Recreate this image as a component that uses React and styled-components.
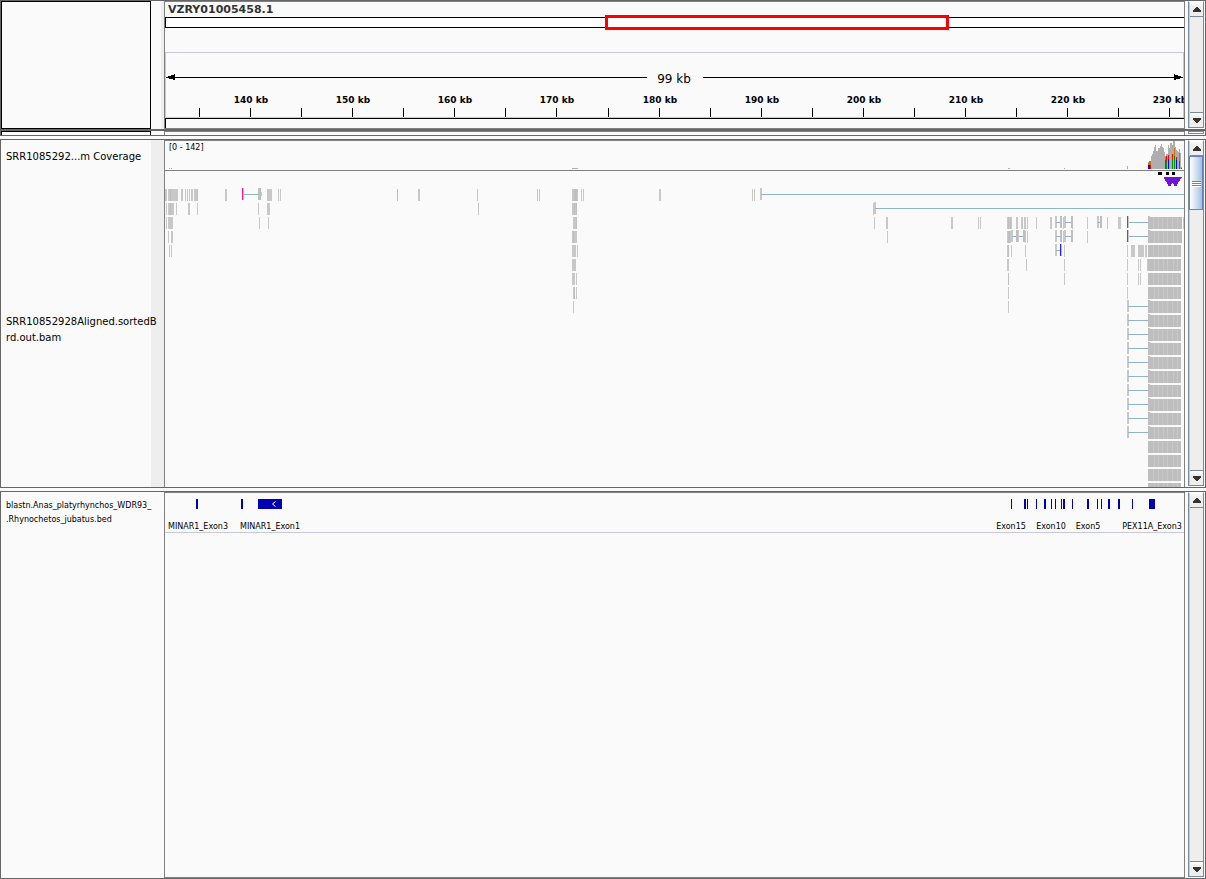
import React from "react";
import styled, { createGlobalStyle } from "styled-components";

const DARK = "#666666";
const MID = "#808080";
const PAPER = "#fafafa";
const GUTTER = "#eeeeee";
const LAVENDER = "#c8c8d8";
const STEEL = "#7a8a99";
const READ = "#c8c8c8";
const READ_DARK = "#bebebe";
const SPLICE = "#8fb4c8";
const FEATURE = "#0000b2";

const GlobalStyle = createGlobalStyle`
  * { box-sizing: border-box; }
  body {
    margin: 0;
    background: ${PAPER};
    color: #000;
    font-family: "DejaVu Sans", Verdana, sans-serif;
  }
`;

const Page = styled.main`
  min-height: 100vh;
  display: flex;
  flex-direction: column;
  gap: 3px;
`;

const Panel = styled.section`
  display: grid;
  grid-template-columns: 150px 13px minmax(0, 1fr) 3px 16px;
  min-height: ${(p) => p.$height || 0}px;
  flex: ${(p) => (p.$grow ? "1 0 auto" : "none")};
  border: 1px solid ${DARK};
  padding-right: 1px;
`;

const HeaderGroup = styled.header`
  display: flex;
  flex-direction: column;
`;

const HeaderPanel = styled(Panel)`
  border-bottom-width: 2px;
`;

const StripPanel = styled(Panel)`
  border-top: 0;
`;

const NameColumn = styled.div`
  display: flex;
  flex-direction: column;
  z-index: 1;
  border: ${(p) => (p.$boxed ? "1px solid #000" : "0")};
  border-bottom-width: ${(p) => (p.$open ? 0 : 1)}px;
`;

const TrackName = styled.div`
  display: flex;
  flex-direction: column;
  justify-content: center;
  flex: ${(p) => (p.$height ? "none" : 1)};
  height: ${(p) => (p.$height ? `${p.$height}px` : "auto")};
  padding: ${(p) => (p.$small ? 0 : 2)}px 0 0 5px;
  font-size: ${(p) => (p.$small ? 8 : 10)}px;
  line-height: ${(p) => (p.$small ? 14 : 16)}px;
  white-space: nowrap;
`;

const Gutter = styled.div`
  background: ${(p) => (p.$shade === "full" ? GUTTER : PAPER)};
  border-right: ${(p) => (p.$shade === "edge" ? `3px solid ${GUTTER}` : "0")};
`;

const DataColumn = styled.div`
  border: 1px solid ${MID};
  border-bottom-width: ${(p) => (p.$open ? 0 : 1)}px;
  overflow: hidden;
`;

const Chart = styled.svg`
  display: block;
  width: 100%;
  height: ${(p) => p.$height}px;
  shape-rendering: crispEdges;
  font-family: inherit;
`;

const TrackRule = styled.div`
  border-bottom: 1px solid ${LAVENDER};
`;

const Spacer = styled.div``;

const Scroll = styled.div`
  display: flex;
  flex-direction: column;
  margin-bottom: 1px;
  border: 1px solid ${STEEL};
  border-top-color: #fff;
  background: ${GUTTER};
  box-shadow: inset 1px 0 0 #b8cfe5;
`;

const ScrollButton = styled.button`
  display: flex;
  align-items: center;
  justify-content: center;
  height: 15px;
  margin: 0 0 0 1px;
  padding: 0;
  border: 0 solid ${STEEL};
  border-width: ${(p) => (p.$down ? "1px 0 0" : "0 0 1px")};
  background: linear-gradient(#ffffff, #eeeeee 30%);
`;

const ScrollTrough = styled.div`
  flex: 1;
`;

const Thumb = styled.div`
  display: flex;
  flex-direction: column;
  align-items: center;
  justify-content: center;
  gap: 1px;
  height: 54px;
  border: 1px solid #6382bf;
  background: linear-gradient(90deg, #ffffff, #c8dcf0 60%, #a3c0dc);
`;

const Grip = styled.i`
  width: 9px;
  height: 1px;
  background: #6382bf;
  box-shadow: 0 1px 0 #ffffff;
`;

const StripScroll = styled.div`
  border: 1px solid ${STEEL};
  background: #fff;
  margin-bottom: 1px;
`;

/* Genomic canvas: column 165 is the first base shown, 1019 columns in all. */
const X0 = 165;
const SPAN = 1019;
const pct = (x) => `${((x - X0) / SPAN) * 100}%`;

function Marks({ top, height, children }) {
  return (
    <svg
      width="100%"
      height={height}
      viewBox={`${X0} ${top} ${SPAN} ${height}`}
      preserveAspectRatio="none"
    >
      {children}
    </svg>
  );
}

function Arrow({ down }) {
  return (
    <svg width="8" height="5" viewBox="0 0 8 5" shapeRendering="crispEdges" aria-hidden="true">
      <path
        fill="#333"
        d={down ? "M0 0h8v2h-1v1h-1v1h-1v1h-2v-1h-1v-1h-1v-1h-1z" : "M3 0h2v1h1v1h1v1h1v2h-8v-2h1v-1h1v-1h1z"}
      />
    </svg>
  );
}

function ScrollBar({ label, thumb }) {
  return (
    <Scroll>
      <ScrollButton type="button" aria-label={`Scroll ${label} up`}>
        <Arrow />
      </ScrollButton>
      <ScrollTrough>
        {thumb && (
          <Thumb>
            <Grip />
            <Grip />
            <Grip />
          </Thumb>
        )}
      </ScrollTrough>
      <ScrollButton type="button" $down aria-label={`Scroll ${label} down`}>
        <Arrow down />
      </ScrollButton>
    </Scroll>
  );
}

const TICKS = [
  199, 250, 301, 352, 403, 454, 505, 556, 608, 659, 710, 761, 812, 863, 914, 965, 1016, 1067,
  1118, 1169,
];

function Ruler() {
  return (
    <Chart $height={126} role="img" aria-label="Chromosome position ruler">
      <Marks top={2} height={126}>
        <rect x="165" y="17" width="1020" height="11" fill="#000" />
        <rect x="166" y="18" width="1018" height="9" fill="#fff" />
        <path fill={LAVENDER} d="M165 52h1019v1h-1019zM165 53h1v65h-1zM1183 53h1v65h-1zM165 117h1019v1h-1019z" />
        <path fill="#000" d="M165 118h1019v1h-1019zM165 119h1v9h-1z" />
        <path fill="#000" d="M166 77h481v1h-481zM703 77h480v1h-480z" />
        <path fill="#000" d="M167 77l8-3v6l-8-2zM1182 77l-8-3v6l8-2z" />
        {TICKS.map((x) => (
          <rect key={x} x={x} y="108" width="1" height="9" />
        ))}
        <rect x="606.5" y="16.5" width="341" height="12" fill="none" stroke="#f00" strokeWidth="3" />
      </Marks>
      <text x="3" y="11" fontSize="11" fontWeight="700" fill="#333">
        VZRY01005458.1
      </text>
      <text x={pct(674)} y="81" fontSize="12" textAnchor="middle">
        99 kb
      </text>
      {TICKS.filter((_, i) => i % 2 === 1).map((x, i) => (
        <text key={x} x={pct(x + 1)} y="101" fontSize="9" fontWeight="700" textAnchor="middle">
          {140 + i * 10} kb
        </text>
      ))}
    </Chart>
  );
}

/* Reads per row as [x, width]. */
const ROWS = [
  [[165, 2], [168, 10], [181, 2], [185, 1], [187, 1], [189, 1], [191, 2], [194, 4], [225, 2], [267, 5], [278, 1], [280, 1], [397, 1], [418, 2], [477, 1], [537, 1], [539, 1], [572, 6], [581, 1], [583, 1], [659, 2], [752, 1], [754, 1]],
  [[166, 1], [168, 6], [176, 1], [188, 2], [197, 1], [258, 1], [267, 3], [478, 1], [572, 5], [873, 1]],
  [[166, 1], [168, 5], [259, 1], [268, 1], [573, 4], [874, 1], [886, 2], [951, 2], [978, 1], [980, 1], [1007, 5], [1016, 2], [1021, 2], [1024, 2], [1027, 1], [1036, 1], [1050, 2], [1063, 1], [1072, 1], [1087, 1], [1107, 1], [1118, 3], [1183, 1]],
  [[168, 1], [171, 2], [572, 5], [887, 1], [1007, 4], [1025, 1], [1027, 1], [1063, 1], [1087, 1]],
  [[169, 1], [171, 1], [572, 4], [577, 1], [1007, 2], [1011, 1], [1025, 1], [1064, 1], [1127, 1], [1131, 4], [1138, 6], [1145, 2]],
  [[572, 4], [1007, 2], [1026, 1], [1064, 1], [1127, 1], [1138, 1], [1140, 1], [1147, 1]],
  [[572, 3], [576, 1], [1008, 1], [1064, 1], [1127, 1], [1138, 1], [1140, 1]],
  [[573, 2], [576, 1], [1008, 1], [1127, 1]],
  [[573, 1], [1008, 1]],
];

/* Overlapping reads, drawn darker, as [row, x, width]. */
const OVERLAPS = [
  [0, 170, 1], [0, 197, 1], [0, 397, 1], [0, 574, 3], [1, 574, 1], [1, 576, 1], [2, 576, 1], [3, 573, 1],
  [1, 170, 1], [7, 574, 1], [2, 1008, 1], [2, 1010, 1], [3, 1008, 2], [4, 1008, 1], [6, 1008, 1],
];

/* Spliced alignments as [row, start, startWidth, end, endWidth]. */
const SPLICED = [
  [0, 243, 1, 258, 3], [0, 760, 2, 1184, 0], [1, 874, 2, 1184, 0],
  [2, 1055, 2, 1060, 2], [2, 1064, 2, 1071, 2], [2, 1097, 2, 1100, 2], [2, 1128, 1, 1148, 2],
  [3, 1011, 2, 1016, 3], [3, 1018, 1, 1023, 2], [3, 1055, 2, 1060, 2], [3, 1064, 2, 1071, 2], [3, 1128, 1, 1148, 2],
  [4, 1055, 2, 1060, 2],
  ...Array.from({ length: 10 }, (_, i) => [8 + i, 1127, 2, 1148, 2]),
];

/* Read ends that carry a strand or mate colour, as [row, x, colour]. */
const FLAGS = [
  [0, 242, "#ff1493"], [2, 1127, "#d82080"], [3, 1127, "#d82080"], [4, 1060, "#2020ff"],
];

const COVERAGE = [
  7, 8, 8, 13, 15, 18, 22, 24, 18, 18, 21, 21, 23, 25, 22, 21, 17, 13, 15, 15, 24, 21, 26, 26, 24,
  28, 28, 22, 19, 18, 17, 20, 16, 2,
];

/* Mismatch columns as [x, bottom colour, bottom height, top colour, top height]. */
const MISMATCH = [
  [1148, "#0000ff", 4, "#d17105", 2], [1149, "#0000ff", 4, "#d17105", 4], [1150, "#ff0000", 4, "#d17105", 4],
  [1165, "#ff0000", 9, "#d17105", 3], [1166, "#009600", 8, "#ff0000", 5], [1168, "#0000ff", 10, "#ff0000", 4],
  [1172, "#009600", 10, "#ff0000", 5], [1174, "#009600", 13, "#d17105", 8], [1176, "#0000ff", 9, "#ff0000", 3],
  [1179, "#009600", 8, "#d17105", 8], [1181, "#ff0000", 1, "#ff0000", 0],
];

const rowY = (row) => 189 + row * 14;

function Pileup() {
  const blocks = Array.from({ length: 20 }, (_, i) => i + 2);
  return (
    <Chart $height={346} role="img" aria-label="Read coverage and alignments">
      <Marks top={141} height={346}>
        <path fill="#aeaeae" d="M572 168h6v1h-6zM1127 166h1v3h-1zM169 168h1v1h-1zM171 168h1v1h-1zM1008 168h2v1h-2zM1064 168h1v1h-1z" />
        {COVERAGE.map((h, i) => (
          <rect key={i} x={1148 + i} y={169 - h} width="1" height={h} fill="#aeaeae" />
        ))}
        {MISMATCH.map(([x, low, lowH, high, highH]) => (
          <g key={x}>
            <rect x={x} y={169 - lowH} width="1" height={lowH} fill={low} />
            <rect x={x} y={169 - lowH - highH} width="1" height={highH} fill={high} />
          </g>
        ))}
        <rect x="165" y="170" width="1019" height="1" fill={MID} />
        <path fill="#000" d="M1158 172h4v3h-4zM1166 172h3v3h-3zM1172 172h3v3h-3z" />
        <path fill="#7014d8" d="M1164 177h18v1h-1v1h-1v2h-1v1h-1v2h-1v2h-3v-2h-1v-1h-1v1h-1v2h-3v-2h-1v-2h-1v-1h-1v-2h-1v-1h-1z" />

        {ROWS.map((reads, row) =>
          reads.map(([x, w]) => (
            <rect key={`${row}-${x}`} x={x} y={rowY(row)} width={w} height="12" fill={READ} />
          ))
        )}
        {OVERLAPS.map(([row, x, w]) => (
          <rect key={`${row}-${x}`} x={x} y={rowY(row)} width={w} height="12" fill={READ_DARK} />
        ))}
        <rect x="261" y="192" width="1" height="4" fill={READ} />
        {blocks.map((row) => (
          <g key={row}>
            <rect x="1148" y={rowY(row)} width={row < 4 ? 34 : 33} height="12" fill={READ_DARK} />
            {[1153, 1158, 1162, 1167, 1172, 1177].map((x, i) => (
              <rect key={x} x={x + ((row * (i + 1)) % 2)} y={rowY(row)} width="1" height="12" fill={READ} />
            ))}
          </g>
        ))}
        {SPLICED.map(([row, start, startW, end, endW]) => (
          <g key={`${row}-${start}`}>
            <rect x={start} y={rowY(row) - 1} width={startW} height="12" fill={READ} />
            <rect x={end} y={rowY(row) - 1} width={endW} height="12" fill={READ_DARK} />
            <rect x={start + 1} y={rowY(row) + 5} width={end - start - 1} height="1" fill={SPLICE} />
          </g>
        ))}
        {FLAGS.map(([row, x, colour]) => (
          <rect key={`${row}-${x}`} x={x} y={rowY(row) - 1} width="1" height="12" fill={colour} />
        ))}
      </Marks>
      <text x="4" y="9" fontSize="8">
        [0 - 142]
      </text>
    </Chart>
  );
}

const FEATURES = [
  [196, 2], [241, 2], [258, 24], [1011, 1], [1024, 2], [1027, 1], [1036, 1], [1044, 2], [1051, 1],
  [1055, 1], [1061, 1], [1063, 2], [1072, 1], [1087, 2], [1097, 1], [1101, 1], [1108, 2],
  [1118, 2], [1132, 1], [1149, 6],
];

const FEATURE_NAMES = [
  [198, "MINAR1_Exon3"], [270, "MINAR1_Exon1"], [1011, "Exon15"], [1051, "Exon10"],
  [1088, "Exon5"], [1152, "PEX11A_Exon3"],
];

function Features() {
  return (
    <TrackRule>
      <Chart $height={39} role="img" aria-label="Exon features">
        <Marks top={493} height={39}>
          {FEATURES.map(([x, w]) => (
            <rect key={x} x={x} y="499" width={w} height="10" fill={FEATURE} />
          ))}
          <path
            d="M275.5 501.5l-3 2.5l3 2.5"
            fill="none"
            stroke="#fff"
            shapeRendering="geometricPrecision"
          />
        </Marks>
        {FEATURE_NAMES.map(([x, name]) => (
          <text key={name} x={pct(x)} y="36" fontSize="8" textAnchor="middle">
            {name}
          </text>
        ))}
      </Chart>
    </TrackRule>
  );
}

export default function App() {
  return (
    <>
      <GlobalStyle />
      <Page>
        <HeaderGroup>
          <HeaderPanel>
            <NameColumn $boxed />
            <Gutter $shade="edge" />
            <DataColumn>
              <Ruler />
            </DataColumn>
            <Spacer />
            <ScrollBar label="header" />
          </HeaderPanel>
          <StripPanel $height={5}>
            <NameColumn $boxed $open />
            <Gutter />
            <DataColumn $open />
            <Spacer />
            <StripScroll />
          </StripPanel>
        </HeaderGroup>

        <Panel>
          <NameColumn $open>
            <TrackName $height={31}>SRR1085292...m Coverage</TrackName>
            <TrackName>
              <span>SRR10852928Aligned.sortedB</span>
              <span>rd.out.bam</span>
            </TrackName>
          </NameColumn>
          <Gutter $shade="full" />
          <DataColumn $open>
            <Pileup />
          </DataColumn>
          <Spacer />
          <ScrollBar label="alignments" thumb />
        </Panel>

        <Panel $grow>
          <NameColumn $open>
            <TrackName $small $height={41}>
              <span>blastn.Anas_platyrhynchos_WDR93_</span>
              <span>.Rhynochetos_jubatus.bed</span>
            </TrackName>
          </NameColumn>
          <Gutter />
          <DataColumn>
            <Features />
          </DataColumn>
          <Spacer />
          <ScrollBar label="features" />
        </Panel>
      </Page>
    </>
  );
}
